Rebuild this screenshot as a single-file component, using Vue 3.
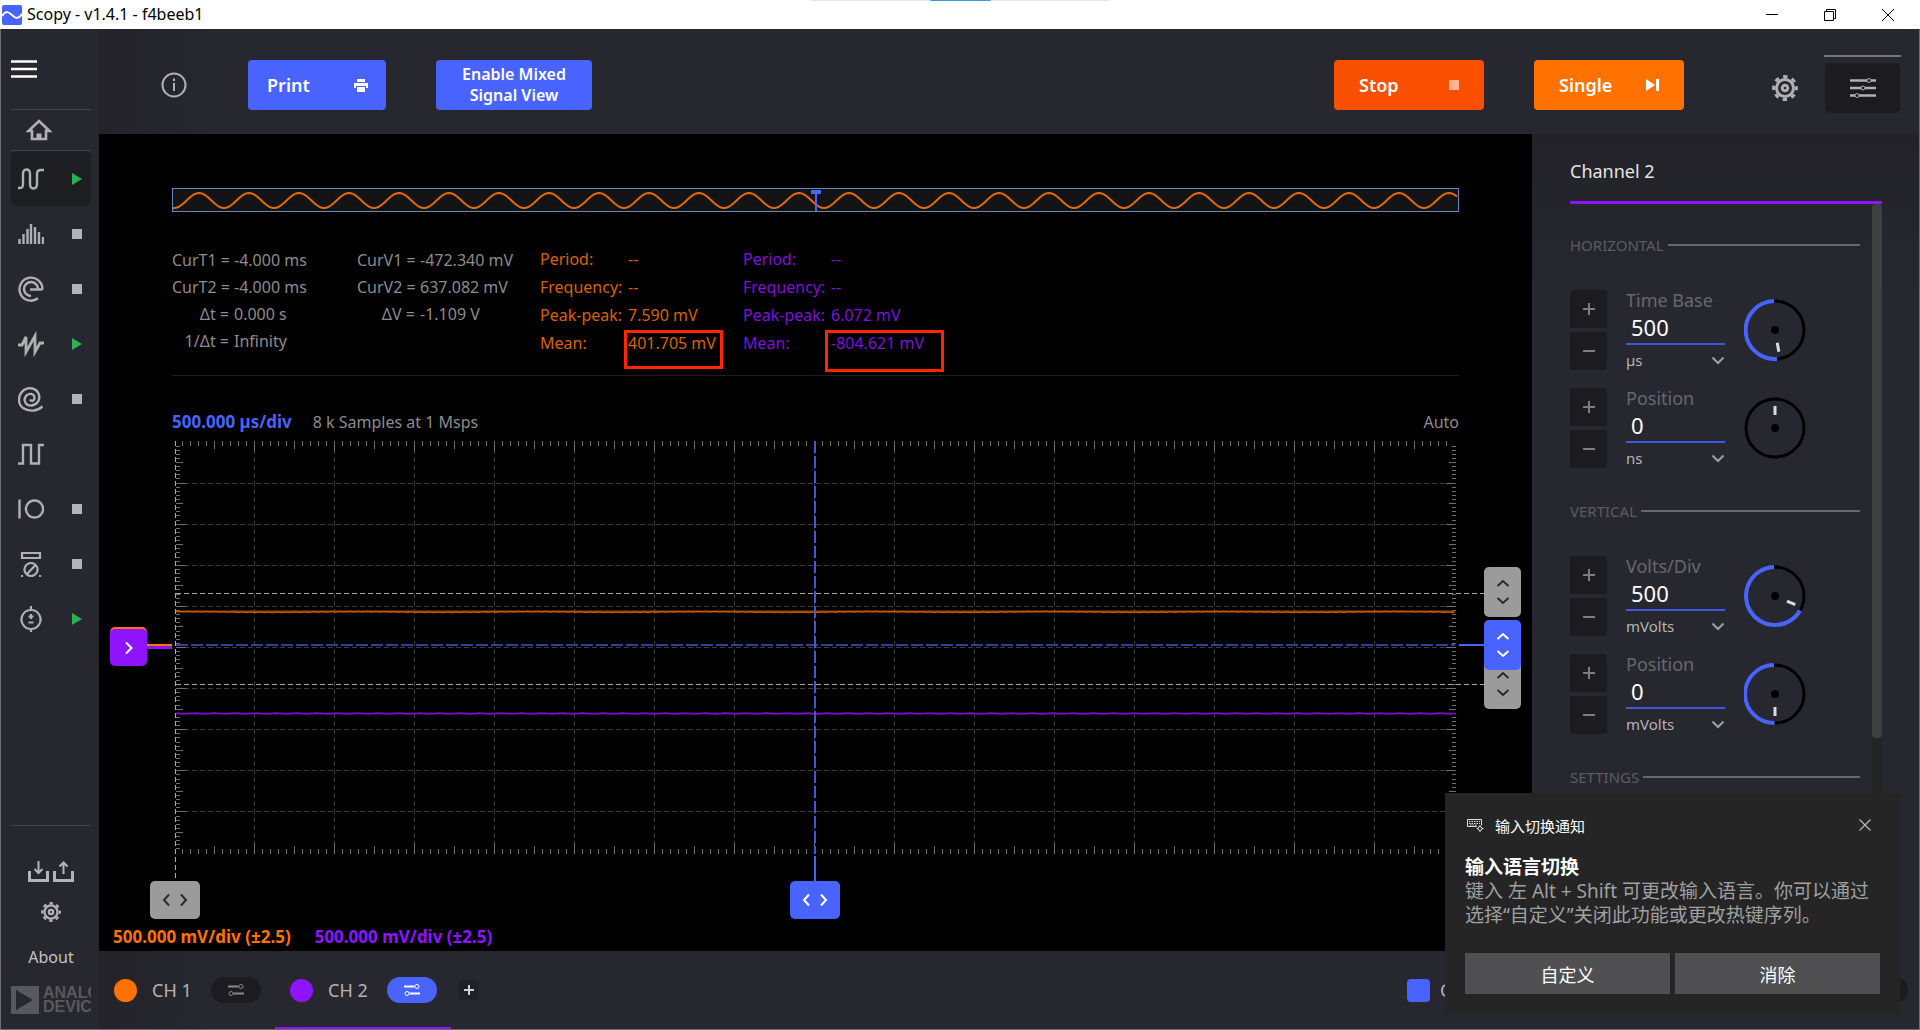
<template>
  <div class="window">
    <header class="titlebar">
      <svg class="app-icon" width="20" height="20" viewBox="0 0 20 20">
        <rect width="20" height="20" rx="2" fill="#4963ff" />
        <path d="M0 11C4 5 7 7 10 10s6 5 10-1" fill="none" stroke="#fff" stroke-width="2" />
      </svg>
      <h1>Scopy - v1.4.1 - f4beeb1</h1>
      <span class="drag-hint"><i></i></span>
      <div class="window-controls">
        <button type="button" aria-label="Minimize">
          <svg width="12" height="12" viewBox="0 0 12 12"><path d="M0 5.5h12" /></svg>
        </button>
        <button type="button" aria-label="Restore">
          <svg width="12" height="12" viewBox="0 0 12 12">
            <path d="M.5 2.5h9v9h-9zM2.5 2V.5h9v9H10" />
          </svg>
        </button>
        <button type="button" aria-label="Close">
          <svg width="12" height="12" viewBox="0 0 12 12"><path d="M0 0l12 12M12 0L0 12" /></svg>
        </button>
      </div>
    </header>

    <div class="workspace">
      <nav class="sidebar">
        <button type="button" class="menu-button" aria-label="Menu">
          <svg width="26" height="18" viewBox="0 0 26 18">
            <path d="M0 1.5h26M0 9h26M0 16.5h26" stroke="#fff" stroke-width="2.5" />
          </svg>
        </button>

        <button type="button" class="home-button" aria-label="Home">
          <svg width="26" height="22" viewBox="0 0 26 22" fill="none" stroke="#b0b0b2" stroke-width="2.6">
            <path d="M2.5 12L13 2l10.500 10H20v8H6v-8z" />
            <path d="M13 14.500V20" stroke-width="5" />
          </svg>
        </button>

        <ul class="tools">
          <li
            v-for="tool in tools"
            :key="tool.name"
            :class="{ active: tool.active }"
          >
            <button type="button" class="tool-button" :aria-label="tool.name">
              <svg width="26" height="26" viewBox="0 0 26 26">
                <path :d="tool.icon" :stroke-width="tool.width || 2.4" />
              </svg>
            </button>
            <button
              v-if="tool.state"
              type="button"
              class="state-button"
              :aria-label="tool.state === 'run' ? 'Running' : 'Stopped'"
            >
              <svg width="10" height="12" viewBox="0 0 10 12">
                <path v-if="tool.state === 'run'" d="M0 0l10 6-10 6z" fill="#27b34f" />
                <rect v-else y="1" width="10" height="10" fill="#b4b4b6" />
              </svg>
            </button>
          </li>
        </ul>

        <div class="sidebar-bottom">
          <div class="save-load">
            <button type="button" aria-label="Save">
              <svg width="21" height="22" viewBox="0 0 21 22" fill="none" stroke="#b4b4b6">
                <path d="M1.500 10v9.500h18V10" stroke-width="3" />
                <path d="M10.500 0v11M6.500 8l4 4 4-4" stroke-width="2" />
              </svg>
            </button>
            <button type="button" aria-label="Load">
              <svg width="21" height="22" viewBox="0 0 21 22" fill="none" stroke="#b4b4b6">
                <path d="M1.500 10v9.500h18V10" stroke-width="3" />
                <path d="M10.500 13V2M6.500 5.500l4-4 4 4" stroke-width="2" />
              </svg>
            </button>
          </div>
          <button type="button" aria-label="Preferences">
            <svg class="gear" width="20" height="20" viewBox="0 0 26 26">
              <circle cx="13" cy="13" r="11.300" class="teeth" />
              <circle cx="13" cy="13" r="8.500" />
              <circle cx="13" cy="13" r="2.800" />
            </svg>
          </button>
          <a href="#about">About</a>
          <div class="brand">
            <svg width="28" height="28" viewBox="0 0 28 28">
              <path d="M0 0h28v28H0zM5 4v20l17-10z" fill="#58595d" fill-rule="evenodd" />
            </svg>
            <span>ANALOG<br>DEVICES</span>
          </div>
        </div>
      </nav>

      <div class="instrument">
        <div class="toolbar">
          <button type="button" class="info-button" aria-label="Help">
            <svg width="26" height="26" viewBox="0 0 26 26" fill="none" stroke="#b0b0b2">
              <circle cx="13" cy="13" r="11.500" stroke-width="2" />
              <path d="M13 11v8M13 6.500V9" stroke-width="2" />
            </svg>
          </button>
          <button type="button" class="action print">
            Print
            <svg width="14" height="13" viewBox="0 0 14 13" fill="#fff">
              <path d="M3 0h8v3H3zM0 4h14v5h-2V7H2v2H0zM3 8h8v5H3z" />
            </svg>
          </button>
          <button type="button" class="action mixed">Enable Mixed Signal View</button>

          <button type="button" class="action stop">
            Stop
            <svg width="10" height="10" viewBox="0 0 10 10"><rect width="10" height="10" fill="#ffb394" /></svg>
          </button>
          <button type="button" class="action run-once">
            Single
            <svg width="13" height="12" viewBox="0 0 13 12" fill="#fff">
              <path d="M0 0l9 6-9 6zM10 0h3v12h-3z" />
            </svg>
          </button>
          <button type="button" class="settings-button" aria-label="General settings">
            <svg class="gear" width="26" height="26" viewBox="0 0 26 26">
              <circle cx="13" cy="13" r="11.300" class="teeth" />
              <circle cx="13" cy="13" r="8.500" />
              <circle cx="13" cy="13" r="2.800" />
            </svg>
          </button>
          <div class="channel-settings">
            <button type="button" aria-label="Channel settings">
              <svg width="26" height="20" viewBox="0 0 26 20" fill="#1c1c20" stroke="#b0b0b2">
                <path d="M0 2.500h26M0 10h26M0 17.500h26" stroke-width="2.400" />
                <circle cx="19" cy="2.500" r="2" />
                <circle cx="13" cy="10" r="2" />
                <circle cx="7" cy="17.500" r="2" />
              </svg>
            </button>
          </div>
        </div>

        <div class="content">
          <main class="plot">
            <svg class="overview" viewBox="0 0 1287 24" preserveAspectRatio="none">
              <rect x=".5" y=".5" width="1286" height="23" fill="#141416" stroke="#6488bd" />
              <path :d="overviewWave" fill="none" stroke="#e26a08" stroke-width="2" />
              <path d="M639 2h10v4h-10zM643 4h2v19h-2z" fill="#4963ff" />
            </svg>

            <div class="readouts">
              <dl class="cursor-values">
                <template v-for="item in timeCursors" :key="item.label">
                  <dt>{{ item.label }} =</dt>
                  <dd>{{ item.value }}</dd>
                </template>
              </dl>
              <dl class="cursor-values volts">
                <template v-for="item in voltCursors" :key="item.label">
                  <dt>{{ item.label }} =</dt>
                  <dd>{{ item.value }}</dd>
                </template>
              </dl>
              <dl
                v-for="channel in measurements"
                :key="channel.name"
                class="measure-values"
                :class="channel.name"
              >
                <template v-for="item in channel.items" :key="item.label">
                  <dt>{{ item.label }}:</dt>
                  <dd>
                    {{ item.value }}
                    <span v-if="item.marked" class="mark"></span>
                  </dd>
                </template>
              </dl>
            </div>

            <div class="scale-row">
              <strong>500.000 µs/div</strong>
              <span>8 k Samples at 1 Msps</span>
              <span class="trigger-mode">Auto</span>
            </div>

            <div class="stage">
              <svg viewBox="0 0 1433 490" preserveAspectRatio="none">
                <g fill="none">
                  <path :d="gridPath" stroke="#3c3c3c" stroke-dasharray="5 3" />
                  <path :d="tickPath" stroke="#6e6e6e" />
                  <path d="M76.500 7v440" stroke="#b0b0b0" stroke-dasharray="5 3" />
                  <path d="M77 159.500h1308M77 250.500h1308" stroke="#a2a2a2" stroke-dasharray="5 3" />
                  <path d="M77 177.500h1279" stroke="#8f4200" stroke-width="2" />
                  <path :d="traceOne" stroke="#d86500" />
                  <path d="M77 279.500h1279" stroke="#560c96" stroke-width="2" />
                  <path :d="traceTwo" stroke="#8312d8" />
                  <path d="M77 211h1279" stroke="#303f9e" stroke-width="2" stroke-dasharray="12 3" />
                  <path d="M716 7v413" stroke="#4358cf" stroke-width="2" stroke-dasharray="12 3" />
                  <path d="M1360 211h25M716 422v25" stroke="#4963ff" stroke-width="2" />
                  <path d="M48 211h25" stroke="#ff7200" stroke-width="2" />
                  <path d="M48 213.500h25" stroke="#9013fe" stroke-width="3" />
                </g>
              </svg>
              <button
                v-for="handle in handles"
                :key="handle.name"
                type="button"
                class="handle"
                :class="[handle.name, handle.shape]"
                :aria-label="handle.label"
              >
                <svg v-if="handle.shape === 'wide'" width="26" height="14" viewBox="0 0 26 14">
                  <path d="M7 1.500L2 7l5 5.500M19 1.500L24 7l-5 5.500" />
                </svg>
                <svg v-else-if="handle.shape === 'tall'" width="14" height="26" viewBox="0 0 14 26">
                  <path d="M1.500 7L7 2l5.500 5M1.500 19L7 24l5.500-5" />
                </svg>
                <svg v-else width="8" height="14" viewBox="0 0 8 14">
                  <path d="M1 1.500L6.500 7 1 12.500" />
                </svg>
              </button>
            </div>

            <div class="channel-scales">
              <strong class="ch1">500.000 mV/div (±2.5)</strong>
              <strong class="ch2">500.000 mV/div (±2.5)</strong>
            </div>
          </main>

          <aside class="panel">
            <h2>Channel 2</h2>
            <div class="panel-body">
              <div class="panel-content">
                <section v-for="group in groups" :key="group.title">
                  <h3>{{ group.title }}</h3>
                  <div v-for="control in group.controls" :key="control.id" class="control">
                    <div class="steps">
                      <button type="button" :aria-label="'Increase ' + control.label">
                        <svg width="14" height="14" viewBox="0 0 14 14"><path d="M7 1v12M1 7h12" /></svg>
                      </button>
                      <button type="button" :aria-label="'Decrease ' + control.label">
                        <svg width="14" height="14" viewBox="0 0 14 14"><path d="M1 7h12" /></svg>
                      </button>
                    </div>
                    <div class="field">
                      <label :for="control.id">{{ control.label }}</label>
                      <input :id="control.id" v-model="control.value" type="text">
                      <div class="unit">
                        <select v-model="control.unit" :aria-label="control.label + ' unit'">
                          <option v-for="unit in control.units" :key="unit">{{ unit }}</option>
                        </select>
                        <svg width="14" height="9" viewBox="0 0 14 9"><path d="M1.500 1.500L7 7l5.500-5.500" /></svg>
                      </div>
                    </div>
                    <svg class="dial" width="62" height="62" viewBox="0 0 62 62">
                      <circle cx="31" cy="31" r="29" />
                      <path v-if="control.angle" :d="dialArc(control.angle)" class="arc" />
                      <circle cx="31" cy="31" r="4" class="hub" />
                      <path d="M31 9v9" class="needle" :transform="`rotate(${control.needle} 31 31)`" />
                    </svg>
                  </div>
                </section>
              </div>
              <div class="scrollbar"><span></span></div>
            </div>
          </aside>
        </div>

        <footer class="channel-bar">
          <div
            v-for="channel in channels"
            :key="channel.label"
            class="channel"
            :class="[channel.name, { selected: channel.selected }]"
          >
            <span class="dot"></span>
            <button type="button" class="channel-name">{{ channel.label }}</button>
            <button type="button" class="pill" :aria-label="channel.label + ' settings'">
              <svg width="16" height="12" viewBox="0 0 16 12">
                <path d="M0 2.500h10.500M5.500 9.500H16" />
                <circle cx="13" cy="2.500" r="2" />
                <circle cx="3" cy="9.500" r="2" />
              </svg>
            </button>
          </div>
          <button type="button" class="add-channel" aria-label="Add channel">
            <svg width="10" height="10" viewBox="0 0 10 10"><path d="M5 0v10M0 5h10" /></svg>
          </button>
          <div class="extras">
            <button type="button" class="cursors-toggle"><i></i>Cursors</button>
            <button type="button" class="pill" aria-label="Trigger settings"></button>
          </div>
        </footer>
      </div>
    </div>

    <section v-if="toastVisible" class="toast" lang="zh-CN">
      <header>
        <svg width="17" height="14" viewBox="0 0 17 14" fill="none" stroke="#e0e0e0">
          <path d="M10 8.500H.5v-7h14V7" />
          <path d="M2 3.500h11M2 5.500h11M3 7h7" stroke-dasharray="1.500 1" />
          <circle cx="13" cy="10.500" r="2" />
          <path d="M13 7v1.500M13 12.500V14M9.800 10.500H11M15 10.500h1.500" />
        </svg>
        <span>输入切换通知</span>
        <button type="button" aria-label="关闭" @click="toastVisible = false">
          <svg width="12" height="12" viewBox="0 0 12 12"><path d="M.5.500l11 11M11.500.500l-11 11" stroke="#b8b8b8" stroke-width="1.200" /></svg>
        </button>
      </header>
      <h2>输入语言切换</h2>
      <p>键入 左 Alt + Shift 可更改输入语言。你可以通过选择“自定义”关闭此功能或更改热键序列。</p>
      <div class="toast-actions">
        <button type="button">自定义</button>
        <button type="button" @click="toastVisible = false">消除</button>
      </div>
    </section>
  </div>
</template>

<script setup>
import { reactive, ref } from 'vue'

const toastVisible = ref(true)

const tools = [
  {
    name: 'Oscilloscope',
    state: 'run',
    active: true,
    icon: 'M0 22h2c2.500 0 3-1.500 3-4V8c0-3 1-4.500 3.500-4.500S12 5 12 8v10c0 3 1 4.500 3.500 4.500S19 21 19 18V8c0-3 1-4 4-4h3'
  },
  {
    name: 'Spectrum Analyzer',
    state: 'stop',
    icon: 'M1.500 23v-5M5.500 23V13M9.500 23V8M13 23V3M17 23V6M21 23V11M25 23v-7'
  },
  {
    name: 'Network Analyzer',
    state: 'stop',
    icon: 'M24.500 13.500A11.500 11.500 0 1 0 20 22.300M24.500 13.500H12M20 13A7 7 0 1 0 13 20'
  },
  {
    name: 'Signal Generator',
    state: 'run',
    icon: 'M0 14h4l4-8v15L17 5v16l5-9h4',
    width: 2.8
  },
  {
    name: 'Data Logger',
    state: 'stop',
    icon: 'M12 13.500c1.500 2.500 5 1 4.500-2-.5-4-6-5-8.500-1.500-3.500 5 .5 10 5.500 9.500 6-.500 9-6 7.300-11.300C18.500 2 11 .500 6 4-.5 9-.5 18 5 22c6 4 14 3.500 19.500-1.500'
  },
  {
    name: 'Logic Analyzer',
    icon: 'M0 22.500h5V4h8v18.500h8V4h5'
  },
  {
    name: 'Digital IO',
    state: 'stop',
    icon: 'M1.500 3.500v19M16.500 4.500a8.500 8.500 0 1 0 .01 0z'
  },
  {
    name: 'Voltmeter',
    state: 'stop',
    icon: 'M4 2h18v5H4zM13 12a6.500 6.500 0 1 0 .01 0zM9 23l8.500-9M3 25h2M21 25h2',
    width: 2.2
  },
  {
    name: 'Power Supply',
    state: 'run',
    icon: 'M13 4a9.500 9.500 0 1 0 .01 0zM13 0v4M13 22v4M13 8v5M10.500 10.500h5M10.500 16.500h5',
    width: 2.2
  }
]

const timeCursors = [
  { label: 'CurT1', value: '-4.000 ms' },
  { label: 'CurT2', value: '-4.000 ms' },
  { label: 'Δt', value: '0.000 s' },
  { label: '1/Δt', value: 'Infinity' }
]

const voltCursors = [
  { label: 'CurV1', value: '-472.340 mV' },
  { label: 'CurV2', value: '637.082 mV' },
  { label: 'ΔV', value: '-1.109 V' }
]

const measurements = [
  {
    name: 'ch1',
    items: [
      { label: 'Period', value: '--' },
      { label: 'Frequency', value: '--' },
      { label: 'Peak-peak', value: '7.590 mV' },
      { label: 'Mean', value: '401.705 mV', marked: true }
    ]
  },
  {
    name: 'ch2',
    items: [
      { label: 'Period', value: '--' },
      { label: 'Frequency', value: '--' },
      { label: 'Peak-peak', value: '6.072 mV' },
      { label: 'Mean', value: '-804.621 mV', marked: true }
    ]
  }
]

const handles = [
  { name: 'volt-low', shape: 'tall', label: 'Voltage cursor 1' },
  { name: 'volt-high', shape: 'tall', label: 'Voltage cursor 2' },
  { name: 'trigger-level', shape: 'tall', label: 'Trigger level' },
  { name: 'time-cursor', shape: 'wide', label: 'Time cursor' },
  { name: 'trigger-time', shape: 'wide', label: 'Trigger position' },
  { name: 'offset', shape: 'arrow', label: 'Channel offset' }
]

const channels = [
  { name: 'ch1', label: 'CH 1' },
  { name: 'ch2', label: 'CH 2', selected: true }
]

const timeUnits = ['ns', 'µs', 'ms', 's']
const voltUnits = ['µVolts', 'mVolts', 'Volts']

const groups = reactive([
  {
    title: 'HORIZONTAL',
    controls: [
      { id: 'time-base', label: 'Time Base', value: '500', unit: 'µs', units: timeUnits, angle: 176, needle: 170 },
      { id: 'time-position', label: 'Position', value: '0', unit: 'ns', units: timeUnits, angle: 0, needle: 0 }
    ]
  },
  {
    title: 'VERTICAL',
    controls: [
      { id: 'volts-div', label: 'Volts/Div', value: '500', unit: 'mVolts', units: voltUnits, angle: 120, needle: 113 },
      { id: 'volt-position', label: 'Position', value: '0', unit: 'mVolts', units: voltUnits, angle: 181, needle: 180 }
    ]
  },
  { title: 'SETTINGS', controls: [] }
])

// arc from the given clockwise angle round the left side up to the top
const dialArc = (angle) => {
  const rad = (angle * Math.PI) / 180
  const x = 31 + 29 * Math.sin(rad)
  const y = 31 - 29 * Math.cos(rad)
  const large = angle < 180 ? 1 : 0

  return `M${x.toFixed(1)} ${y.toFixed(1)}A29 29 0 ${large} 1 30 2`
}

const buildWave = () => {
  const points = []

  for (let x = 1; x <= 1286; x += 2) {
    const y = 12.5 - 7.5 * Math.cos(((x - 27) / 50) * 2 * Math.PI)
    points.push(`${x} ${y.toFixed(1)}`)
  }

  return 'M' + points.join('L')
}

const overviewWave = buildWave()

const columnX = (index) => 75.5 + index * 80
const rowY = (index) => Math.floor(8 + index * 41.1) + 0.5

const buildGrid = () => {
  let path = ''

  for (let i = 1; i < 16; i += 1) {
    path += `M${columnX(i)} 7v413`
  }

  for (let i = 1; i < 10; i += 1) {
    path += `M77 ${rowY(i)}h1279`
  }

  return path
}

const buildTicks = () => {
  let path = ''

  for (let i = 1; i < 160; i += 1) {
    const x = 75.5 + i * 8
    const size = i % 10 === 0 ? 11 : i % 5 === 0 ? 8 : 5
    path += `M${x} 7v${size}M${x} 420v-${size}`
  }

  for (let i = 1; i < 100; i += 1) {
    const y = Math.floor(8 + i * 4.11) + 0.5
    const size = i % 10 === 0 ? 10 : i % 5 === 0 ? 7 : 4
    path += `M77 ${y}h${size}M1357 ${y}h-${size}`
  }

  return path
}

const gridPath = buildGrid()
const tickPath = buildTicks()

const buildTrace = (base, seed) => {
  const points = []

  for (let x = 77; x <= 1356; x += 3) {
    const noise = Math.sin(x * seed) * Math.sin(x * 0.37)
    points.push(`${x} ${(base + noise * 0.9).toFixed(1)}`)
  }

  return 'M' + points.join('L')
}

const traceOne = buildTrace(178, 12.9)
const traceTwo = buildTrace(279.5, 7.7)
</script>

<style>
body {
  background: #272730;
}
</style>

<style scoped>
* {
  box-sizing: border-box;
}

.window {
  display: flex;
  min-height: 100vh;
  flex-direction: column;
  background: #272730;
  color: #b4b4b6;
  font-family: "Noto Sans", "Open Sans", sans-serif;
  font-size: 16px;
}

button {
  padding: 0;
  background: none;
  border: 0;
  color: inherit;
  font: inherit;
  cursor: pointer;
}

button svg {
  display: block;
}

h1,
h2,
h3,
p,
ul,
dl,
dd {
  margin: 0;
  padding: 0;
}

.titlebar {
  position: relative;
  display: flex;
  height: 29px;
  align-items: center;
  gap: 5px;
  padding-left: 2px;
  background: #fff;
  color: #000;
}

.titlebar h1 {
  padding-bottom: 2px;
  font-size: 16px;
  font-weight: 400;
  line-height: 20px;
}

.drag-hint {
  position: absolute;
  top: 0;
  left: 50%;
  width: 301px;
  height: 1px;
  background: #e6e6e6;
  transform: translateX(-50%);
}

.drag-hint i {
  display: block;
  width: 60px;
  height: 1px;
  margin: 0 auto;
  background: #3c96e0;
}

.window-controls {
  display: flex;
  margin-left: auto;
  padding-right: 3px;
}

.window-controls button {
  display: grid;
  width: 58px;
  height: 28px;
  place-items: center;
}

.window-controls path {
  fill: none;
  stroke: #000;
}

.workspace {
  display: flex;
  flex: 1;
  border: solid #6b6b70;
  border-width: 0 1px 1px;
}

/* sidebar */
.sidebar {
  display: flex;
  width: 98px;
  flex: none;
  flex-direction: column;
  padding: 0 8px 15px 10px;
  background: #272730;
}

.menu-button {
  display: flex;
  height: 81px;
  align-items: center;
  border-bottom: 1px solid #434347;
}

.home-button {
  display: flex;
  height: 41px;
  align-items: center;
  padding-left: 15px;
  border-bottom: 1px solid #434347;
}

.tools {
  list-style: none;
}

.tools li {
  display: flex;
  height: 55px;
  align-items: center;
  justify-content: space-between;
  padding: 0 9px 0 7px;
  border-radius: 6px;
}

.tools li.active {
  background: #1d1e22;
}

.tool-button path {
  fill: none;
  stroke: #b0b0b2;
}

.sidebar-bottom {
  display: flex;
  flex-direction: column;
  align-items: center;
  margin-top: auto;
  border-top: 1px solid #434347;
}

.save-load {
  display: flex;
  gap: 4px;
  margin: 35px 0 19px;
}

.sidebar-bottom a {
  margin: 24px 0 18px;
  color: #c4c4c6;
  line-height: 22px;
  text-decoration: none;
}

.brand {
  display: flex;
  width: 100%;
  gap: 4px;
  overflow: hidden;
  color: #58595d;
  font-family: "Liberation Sans", sans-serif;
  font-weight: 700;
  line-height: 14px;
}

.brand svg {
  flex: none;
}

.gear circle {
  fill: none;
  stroke: #b0b0b2;
  stroke-width: 3;
}

.gear .teeth {
  stroke-width: 3.2;
  stroke-dasharray: 4.4 4.475;
  stroke-dashoffset: 2.2;
}

/* toolbar */
.instrument {
  display: flex;
  min-width: 0;
  flex: 1;
  flex-direction: column;
}

.toolbar {
  display: flex;
  height: 105px;
  align-items: center;
  padding: 7px 18px 0 62px;
  background: linear-gradient(90deg, #232328, #272730 120px);
}

.info-button {
  margin-right: 61px;
}

.action {
  display: flex;
  height: 50px;
  align-items: center;
  justify-content: space-between;
  border-radius: 4px;
  color: #fff;
  font-size: 18px;
  font-weight: 600;
}

.print {
  width: 138px;
  margin-right: 50px;
  padding: 0 18px 0 19px;
  background: #4963ff;
}

.mixed {
  width: 156px;
  justify-content: center;
  padding: 0 20px;
  background: #4963ff;
  font-size: 16px;
  line-height: 21px;
}

.stop {
  width: 150px;
  margin-left: auto;
  padding: 0 25px;
  background: #f85000;
}

.run-once {
  width: 150px;
  margin-left: 50px;
  padding: 0 25px;
  background: #ff7200;
}

.settings-button {
  margin: 6px 26px 0 88px;
}

.channel-settings {
  padding: 6px 1px 0;
  border-top: 2px solid #77777a;
  margin-bottom: 3px;
}

.channel-settings button {
  display: grid;
  width: 75px;
  height: 50px;
  place-items: center;
  background: #1c1c20;
  border-radius: 5px;
}

.content {
  display: flex;
  flex: 1;
}

/* plot */
.plot {
  display: flex;
  min-width: 0;
  flex: 1;
  flex-direction: column;
  padding-top: 54px;
  background: #000;
}

.overview {
  display: block;
  width: calc(100% - 146px);
  height: 24px;
  margin: 0 73px;
}

.readouts {
  display: flex;
  height: 132px;
  margin: 32px 73px 0;
  border-bottom: 1px solid #1e1e1e;
}

.readouts dl {
  display: grid;
  align-content: start;
}

.cursor-values {
  grid-template-columns: 57px 123px;
  column-gap: 5px;
  margin-top: 3px;
  color: #8c8c8c;
  line-height: 27px;
}

.cursor-values dt {
  text-align: right;
  white-space: nowrap;
}

.cursor-values.volts {
  grid-template-columns: 58px 120px;
}

.measure-values {
  grid-template-columns: 84px 110px;
  column-gap: 4px;
  margin-top: 1px;
  margin-right: 5px;
  line-height: 28px;
}

.measure-values.ch1 {
  color: #d96200;
}

.measure-values.ch2 {
  color: #7d12dd;
}

.measure-values dd {
  position: relative;
}

.mark {
  position: absolute;
  top: 1px;
  left: -4px;
  width: 99px;
  height: 39px;
  border: 3px solid #ff2600;
}

.ch2 .mark {
  left: -6px;
  width: 119px;
  height: 42px;
}

.scale-row {
  display: flex;
  gap: 21px;
  margin: 35px 73px 1px;
  color: #8c8c8c;
  line-height: 22px;
}

.scale-row strong {
  color: #4963ff;
  font-size: 17px;
}

.trigger-mode {
  margin-left: auto;
}

.stage {
  position: relative;
  min-height: 490px;
  flex: 1;
}

.stage > svg {
  position: absolute;
  width: 100%;
  height: 100%;
}

.handle {
  position: absolute;
  display: grid;
  place-items: center;
  background: #9b9b9b;
  border-radius: 5px;
}

.handle path {
  fill: none;
  stroke: #2b2b2b;
  stroke-width: 2;
}

.tall {
  right: 11px;
  width: 37px;
  height: 50px;
}

.wide {
  top: 447px;
  width: 50px;
  height: 38px;
}

.volt-low {
  top: 133px;
}

.volt-high {
  top: 225px;
}

.trigger-level {
  top: 186px;
}

.time-cursor {
  left: 51px;
}

.trigger-time {
  left: calc(50% - 26px);
}

.trigger-level,
.trigger-time {
  background: #4963ff;
}

.trigger-level path,
.trigger-time path,
.offset path {
  stroke: #fff;
}

.offset {
  top: 193px;
  left: 11px;
  width: 37px;
  height: 39px;
  background: #9013fe;
  border-top: 2px solid #ff7200;
}

.channel-scales {
  display: flex;
  gap: 24px;
  padding: 1px 14px 2px;
  font-size: 17px;
  line-height: 24px;
}

.channel-scales .ch1 {
  color: #ff7200;
}

.channel-scales .ch2 {
  color: #9013fe;
}

/* right panel */
.panel {
  display: flex;
  width: 387px;
  flex: none;
  flex-direction: column;
  padding: 25px 37px 0 38px;
  background: linear-gradient(#222228, #272730 160px);
}

.panel h2 {
  padding-bottom: 18px;
  border-bottom: 3px solid #9013fe;
  color: #e4e4e6;
  font-size: 18px;
  font-weight: 400;
  line-height: 24px;
}

.panel-body {
  display: flex;
  flex: 1;
  gap: 12px;
}

.panel-content {
  flex: 1;
  padding-top: 1px;
}

.panel section {
  padding-top: 30px;
}

.panel h3 {
  display: flex;
  align-items: center;
  gap: 4px;
  margin-bottom: 35px;
  color: #5c5c60;
  font-size: 15px;
  font-weight: 400;
  line-height: 20px;
}

.panel section:last-child h3 {
  margin-bottom: 0;
}

.panel h3::after {
  height: 2px;
  flex: 1;
  background: #68686b;
  content: "";
}

.control {
  display: flex;
  gap: 19px;
}

.control + .control {
  margin-top: 15px;
}

.steps {
  display: flex;
  flex-direction: column;
  gap: 4px;
}

.steps button {
  display: grid;
  width: 37px;
  height: 38px;
  place-items: center;
  background: #1c1c20;
  border-radius: 4px 4px 0 0;
}

.steps button + button {
  border-radius: 0 0 4px 4px;
}

.steps path {
  stroke: #7d7d80;
  stroke-width: 2;
}

.field {
  display: flex;
  width: 99px;
  flex-direction: column;
}

.field label {
  color: #68686b;
  font-size: 18px;
  line-height: 20px;
}

.field input {
  width: 100%;
  height: 35px;
  padding: 0 0 0 5px;
  background: none;
  border: 0;
  border-bottom: 2px solid #4058e0;
  color: #fff;
  font: inherit;
  font-size: 22px;
}

.unit {
  display: grid;
  margin-top: 2px;
  align-items: center;
}

.unit select,
.unit svg {
  grid-area: 1 / 1;
}

.unit select {
  width: 100%;
  height: 26px;
  padding: 0;
  background: none;
  border: 0;
  appearance: none;
  color: #b4b4b6;
  font: inherit;
  font-size: 15px;
}

.unit svg {
  justify-self: end;
  pointer-events: none;
}

.unit path {
  fill: none;
  stroke: #a0a0a2;
  stroke-width: 2;
}

.dial {
  margin-top: 9px;
}

.dial circle,
.dial path {
  fill: none;
  stroke: #000;
  stroke-width: 3;
}

.dial .hub {
  fill: #000;
  stroke: none;
}

.dial .arc {
  stroke: #4963ff;
  stroke-width: 4;
}

.dial .needle {
  stroke: #dcdcdc;
}

.scrollbar {
  width: 10px;
  background: #242426;
}

.scrollbar span {
  display: block;
  height: 534px;
  background: #404040;
  border-radius: 4px;
}

/* bottom channel bar */
.channel-bar {
  display: flex;
  height: 78px;
  align-items: center;
  background: linear-gradient(90deg, #232328, #272730 120px);
}

.channel {
  display: flex;
  width: 176px;
  height: 78px;
  align-items: center;
  padding: 2px 14px 0 15px;
  border-bottom: 2px solid transparent;
}

.channel.selected {
  border-color: #9013fe;
}

.channel .dot {
  width: 23px;
  height: 23px;
  margin-right: 15px;
  border-radius: 50%;
  background: #ff7200;
}

.channel.ch2 .dot {
  background: #9013fe;
}

.channel-name {
  font-size: 18px;
}

.pill {
  display: grid;
  width: 50px;
  height: 26px;
  place-items: center;
  margin-left: auto;
  background: #1c1c20;
  border-radius: 13px;
}

.pill path,
.pill circle {
  fill: none;
  stroke: #8b8b8e;
  stroke-width: 2;
}

.pill circle {
  stroke-width: 1;
}

.selected .pill {
  background: #4963ff;
}

.selected .pill path,
.selected .pill circle {
  stroke: #fff;
}

.add-channel {
  display: grid;
  width: 20px;
  height: 20px;
  place-items: center;
  margin-left: 8px;
  background: #202126;
  border-radius: 3px;
}

.add-channel path {
  stroke: #d0d0d2;
  stroke-width: 2;
}

.extras {
  display: flex;
  width: 501px;
  align-items: center;
  margin-right: 11px;
  margin-left: auto;
}

.cursors-toggle {
  display: flex;
  align-items: center;
  gap: 10px;
  font-size: 18px;
}

.cursors-toggle i {
  width: 23px;
  height: 23px;
  background: #4963ff;
  border-radius: 4px;
}

/* system notification */
.toast {
  position: fixed;
  right: 20px;
  bottom: 16px;
  width: 455px;
  padding: 19px 20px 20px;
  background: #252526;
  color: #fff;
  font-family: "Noto Sans", "Noto Sans CJK SC", sans-serif;
}

.toast header {
  display: flex;
  height: 26px;
  align-items: center;
  gap: 11px;
  padding: 0 9px 0 2px;
  font-size: 15px;
}

.toast header button {
  margin-left: auto;
}

.toast h2 {
  margin-top: 17px;
  font-size: 19px;
  font-weight: 700;
  line-height: 24px;
}

.toast p {
  color: #a0a0a0;
  font-size: 19px;
  line-height: 24px;
}

.toast-actions {
  display: flex;
  gap: 5px;
  margin-top: 26px;
}

.toast-actions button {
  height: 41px;
  flex: 1;
  background: #505052;
  font-size: 18px;
}
</style>
